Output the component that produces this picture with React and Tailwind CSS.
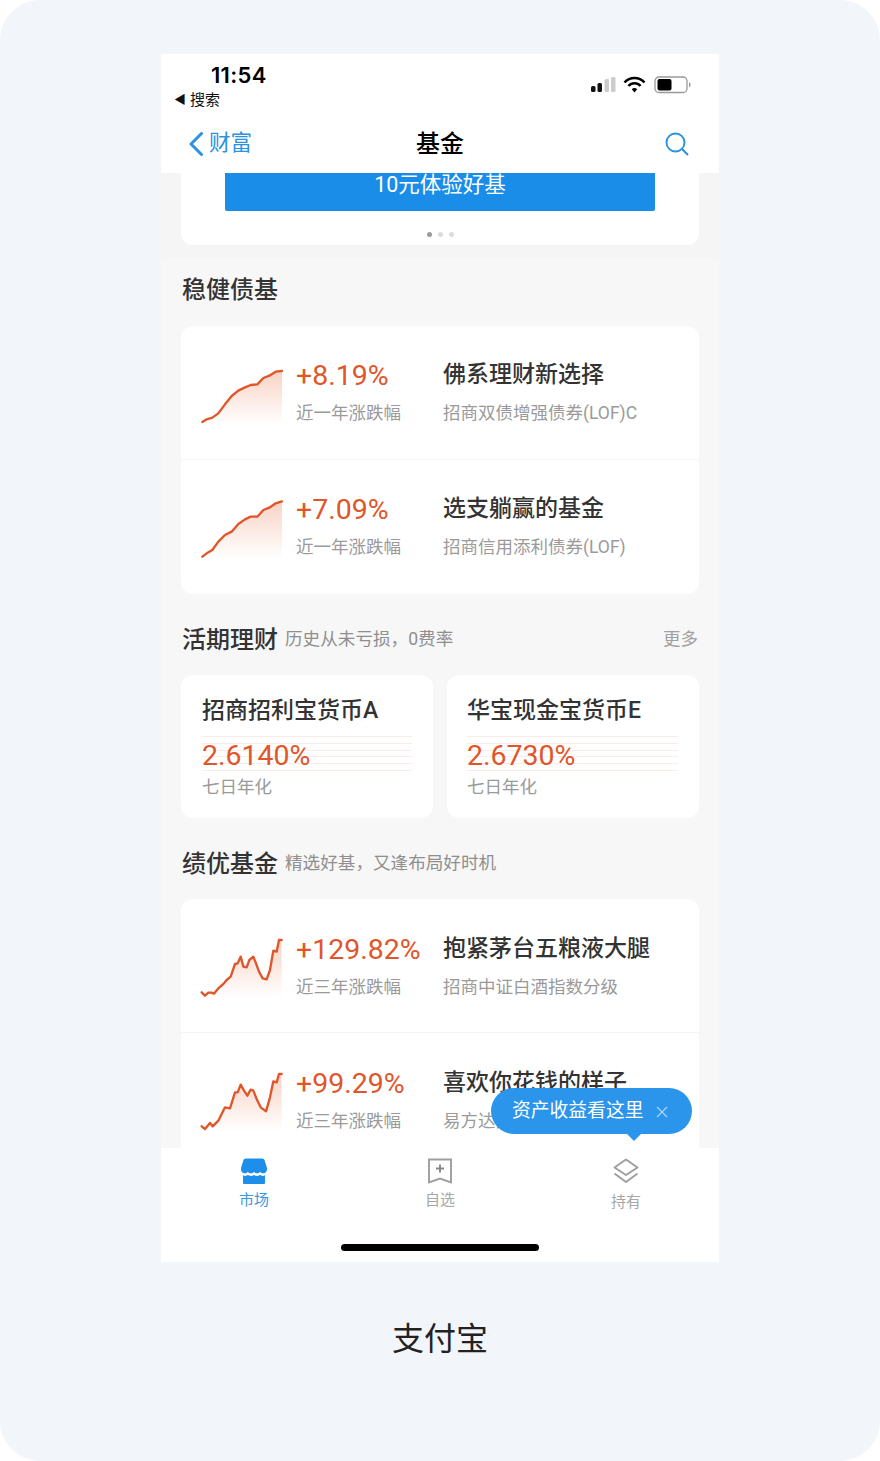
import React from "react";

const Spark = ({ id, view, points }) => {
    const [x, y, w, h] = view;
    const line = points.map((p) => p.join(",")).join(" ");
    const last = points[points.length - 1];
    const area = `${line} ${last[0]},${y + h - 2} ${points[0][0]},${y + h - 2}`;
    return (
        <svg viewBox={view.join(" ")} className="w-[85px] h-[60px] shrink-0">
            <defs>
                <linearGradient id={id} x1="0" y1="0" x2="0" y2="1">
                    <stop offset="0%" stopColor="#e9612f" stopOpacity="0.28" />
                    <stop offset="100%" stopColor="#e9612f" stopOpacity="0" />
                </linearGradient>
            </defs>
            <polygon points={area} fill={`url(#${id})`} />
            <polyline points={line} fill="none" stroke="#e0562a" strokeWidth="7" strokeLinejoin="round" strokeLinecap="round" />
        </svg>
    );
};

const chartA = [[67,246],[80,238],[97,233],[115,220],[135,193],[155,168],[175,152],[195,142],[212,135],[232,133],[250,114],[268,107],[287,95],[306,93]];
const chartB = [[67,650],[80,640],[97,630],[115,605],[135,585],[155,575],[175,552],[195,538],[212,530],[232,530],[250,510],[268,503],[287,490],[306,484]];
const chartC = [[35,217],[45,227],[55,218],[65,218],[72,221],[85,205],[100,192],[110,180],[122,170],[135,132],[143,130],[152,110],[160,140],[170,142],[178,120],[190,110],[198,130],[207,155],[218,175],[230,178],[240,150],[250,92],[260,95],[267,60],[275,60]];
const chartD = [[35,622],[45,630],[60,612],[68,622],[85,605],[105,565],[120,568],[135,520],[143,520],[152,497],[162,515],[172,530],[182,512],[190,515],[200,540],[212,565],[228,577],[240,535],[250,487],[260,490],[267,465],[275,465]];

const FundRow = ({ id, view, points, rate, period, title, name, divider, low }) => (
    <div className={`h-[134px] flex items-start pl-[19px] ${divider ? "border-b border-[#f4f4f4]" : ""}`}>
        <div className="mt-[39px]">
            <Spark id={id} view={view} points={points} />
        </div>
        <div className={`w-[147px] ml-[11px] shrink-0 ${low ? "pt-[32px]" : "pt-[31px]"}`}>
            <div className="text-[28.5px] leading-[38px] text-[#e0562a] whitespace-nowrap">{rate}</div>
            <div className="text-[17.5px] leading-[26px] mt-[5px] text-[#9a9a9a] whitespace-nowrap">{period}</div>
        </div>
        <div className={`whitespace-nowrap ${low ? "pt-[32px]" : "pt-[31px]"}`}>
            <div className="text-[23px] leading-[36px] font-medium text-[#333]">{title}</div>
            <div className="text-[17.5px] leading-[26px] mt-[7px] text-[#9a9a9a]">{name}</div>
        </div>
    </div>
);

const MoneyCard = ({ name, rate, tight }) => (
    <div className={`bg-white rounded-xl h-[143px] pr-[21px] pt-[19px] ${tight ? "pl-[20px]" : "pl-[21px]"}`}>
        <div className="text-[23px] leading-[34px] text-[#333] font-medium whitespace-nowrap">{name}</div>
        <div className="relative mt-[8px] h-[35px]">
            <div className="absolute inset-x-0 top-0 h-[35px] flex flex-col justify-between">
                <div className="h-px bg-[#faece6]" />
                <div className="h-px bg-[#faece6]" />
                <div className="h-px bg-[#faece6]" />
                <div className="h-px bg-[#faece6]" />
                <div className="h-px bg-[#faece6]" />
                <div className="h-px bg-[#faece6]" />
            </div>
            <div className="relative pt-[2px] text-[28.5px] leading-[36px] text-[#e0562a]">{rate}</div>
        </div>
        <div className="text-[17.5px] leading-[26px] mt-[3px] text-[#9a9a9a]">七日年化</div>
    </div>
);

const SectionHead = ({ title, note, more }) => (
    <div className="h-[81px] pt-[10px] flex items-center px-[21px]">
        <span className="text-[24px] font-medium text-[#333]">{title}</span>
        {note && <span className="text-[17.6px] text-[#8f8f8f] ml-[7px]">{note}</span>}
        {more && <span className="text-[17.5px] text-[#a0a0a0] ml-auto">{more}</span>}
    </div>
);

export default function App() {
    return (
        <div className="w-[880px] h-[1461px] bg-[#f2f5fa] rounded-[40px] pt-[54px] font-['Roboto','Noto_Sans_CJK_SC',sans-serif]">
            <div className="relative w-[558px] h-[1208px] ml-[161px] bg-[#f7f7f7] flex flex-col overflow-hidden">
                {/* status + nav */}
                <div className="h-[119px] bg-white shrink-0 relative z-10">
                    <div className="h-[62px] flex justify-between pr-[28px]">
                        <div>
                            <div className="pl-[50px] pt-[8px] text-[22px] leading-[26px] font-semibold tracking-[0.3px] font-['Inter'] text-black">11:54</div>
                            <div className="pl-[13px] text-[15px] leading-[24px] text-[#111] flex items-center">
                                <span className="text-[12px] mr-[4px]">◀</span>搜索
                            </div>
                        </div>
                        <svg viewBox="0 0 100 20" className="w-[100px] h-[20px] mt-[22px]">
                            <rect x="0" y="10" width="4.5" height="6" rx="1.5" fill="#111" />
                            <rect x="6.5" y="7" width="4.5" height="9" rx="1.5" fill="#111" />
                            <rect x="13.5" y="3" width="4.5" height="13" rx="1.5" fill="#ccc" />
                            <rect x="20" y="1" width="4.5" height="15" rx="1.5" fill="#ccc" />
                            <path d="M33.5 6.5a13.5 13.5 0 0 1 20 0" fill="none" stroke="#000" strokeWidth="2.6" />
                            <path d="M37.5 10a8 8 0 0 1 12 0" fill="none" stroke="#000" strokeWidth="2.6" />
                            <path d="M40.8 13.2a3.6 3.6 0 0 1 5.4 0L43.5 16.5z" fill="#000" />
                            <rect x="64" y="1" width="32" height="15.5" rx="4" fill="none" stroke="#999" strokeWidth="1.3" />
                            <rect x="66.5" y="3" width="14" height="11.5" rx="2" fill="#000" />
                            <rect x="98" y="6.5" width="1.4" height="4.5" rx="0.7" fill="#999" />
                        </svg>
                    </div>
                    <div className="relative h-[55px] flex items-center justify-between pl-[27px] pr-[30px]">
                        <div className="flex items-center text-[#2a92df]">
                            <svg viewBox="0 0 16 24" className="w-[16px] h-[24px]">
                                <path d="M13.5 1.5 3 12l10.500 10.500" fill="none" stroke="currentColor" strokeWidth="3" strokeLinecap="round" strokeLinejoin="round" />
                            </svg>
                            <span className="text-[21.5px] ml-[5px]">财富</span>
                        </div>
                        <span className="absolute left-0 right-0 text-center text-[24px] text-black font-medium">基金</span>
                        <svg viewBox="0 0 24 24" className="w-[24px] h-[24px] text-[#2a92df]">
                            <circle cx="10.5" cy="10.5" r="9" fill="none" stroke="currentColor" strokeWidth="1.9" />
                            <path d="m17.5 17.5 5 5" fill="none" stroke="currentColor" strokeWidth="1.9" strokeLinecap="round" />
                        </svg>
                    </div>
                </div>

                {/* scrolling content */}
                <div className="flex-1 overflow-hidden">
                    <div className="bg-[#f5f5f5] h-[85px] px-5">
                        <div className="bg-white rounded-b-xl h-[72px] px-[44px]">
                            <div className="h-[38px] bg-[#1a8de8] rounded-b-[2px] text-center text-white text-[21.5px] leading-[24px]">10元体验好基</div>
                            <div className="flex justify-center gap-[6px] mt-[21px]">
                                <div className="w-[5px] h-[5px] rounded-full bg-[#9b9b9b]" />
                                <div className="w-[5px] h-[5px] rounded-full bg-[#dcdcdc]" />
                                <div className="w-[5px] h-[5px] rounded-full bg-[#dcdcdc]" />
                            </div>
                        </div>
                    </div>

                    <div className="h-[68px] pb-[4px] flex items-center px-[21px] text-[24px] font-medium text-[#333]">稳健债基</div>
                    <div className="mx-5 bg-white rounded-xl">
                        <FundRow id="a" view={[60, 75, 255, 180]} points={chartA} rate="+8.19%" period="近一年涨跌幅" title="佛系理财新选择" name="招商双债增强债券(LOF)C" divider />
                        <FundRow id="b" view={[60, 477, 255, 180]} points={chartB} rate="+7.09%" period="近一年涨跌幅" title="选支躺赢的基金" name="招商信用添利债券(LOF)" />
                    </div>

                    <SectionHead title="活期理财" note="历史从未亏损，0费率" more="更多" />
                    <div className="mx-5 grid grid-cols-2 gap-[14px]">
                        <MoneyCard name="招商招利宝货币A" rate="2.6140%" />
                        <MoneyCard name="华宝现金宝货币E" rate="2.6730%" tight />
                    </div>

                    <SectionHead title="绩优基金" note="精选好基，又逢布局好时机" />
                    <div className="mx-5 bg-white rounded-xl">
                        <FundRow id="c" view={[30, 54, 255, 180]} points={chartC} rate="+129.82%" period="近三年涨跌幅" title="抱紧茅台五粮液大腿" name="招商中证白酒指数分级" divider low />
                        <FundRow id="d" view={[30, 459, 255, 180]} points={chartD} rate="+99.29%" period="近三年涨跌幅" title="喜欢你花钱的样子" name="易方达消费行业股票" low />
                    </div>
                </div>

                {/* tab bar */}
                <div className="h-[114px] bg-white shrink-0 relative z-10">
                    <div className="grid grid-cols-3 pt-[10px]">
                        <div className="flex flex-col items-center text-[#3a97e0]">
                            <svg viewBox="0 0 26 26" className="w-[26px] h-[26px]">
                                <path d="M5 .5h16c1.300 0 2.200.7 2.600 1.800L26 10c.3 2.800-1.200 5.300-3.500 5.300-1.600 0-2.800-.7-3.300-1.600-.8 1-1.900 1.600-3.100 1.600s-2.300-.6-3.100-1.600c-.8 1-1.900 1.600-3.100 1.600s-2.300-.6-3.100-1.600c-.5.900-1.700 1.600-3.300 1.600C1.200 15.300-.3 12.800 0 10l2.400-7.700C2.800 1.200 3.700.5 5 .5z" fill="#1d8fea" />
                                <path d="M2 17.300c1.500.8 3.400.8 4.800-.2 1.800 1.100 4.200 1.100 6.200-.1 2 1.200 4.400 1.200 6.200.1 1.400 1 3.300 1 4.800.2V25a1 1 0 0 1-1 1H3a1 1 0 0 1-1-1z" fill="#1d8fea" />
                            </svg>
                            <span className="text-[15px] leading-[20px] mt-[6px]">市场</span>
                        </div>
                        <div className="flex flex-col items-center text-[#a6a6a6]">
                            <svg viewBox="0 0 26 26" className="w-[26px] h-[26px]">
                                <path d="M2 1.500h22v23l-11-4-11 4z" fill="none" stroke="#9f9f9f" strokeWidth="1.900" />
                                <path d="M13 6.500v8M9 10.500h8" fill="none" stroke="#888" strokeWidth="1.900" />
                            </svg>
                            <span className="text-[15px] leading-[20px] mt-[6px]">自选</span>
                        </div>
                        <div className="flex flex-col items-center text-[#a6a6a6]">
                            <svg viewBox="0 0 26 26" className="w-[26px] h-[26px]">
                                <path d="M13 1.500 24.500 9.500 13 17 1.500 9.500z" fill="none" stroke="#9f9f9f" strokeWidth="2" strokeLinejoin="round" />
                                <path d="M1.500 15.500 13 24l11.500-8.500" fill="none" stroke="#9f9f9f" strokeWidth="2" strokeLinejoin="round" />
                            </svg>
                            <span className="text-[15px] leading-[20px] mt-[8px]">持有</span>
                        </div>
                    </div>
                    <div className="absolute left-[180px] bottom-[11px] w-[198px] h-[7px] rounded-full bg-black" />
                </div>

                {/* tooltip over the list */}
                <div className="absolute left-[330px] top-[1034px] z-20 w-[201px] h-[46px] pt-[1px] rounded-full bg-[#2b95ec] flex items-center pl-[21px] text-white text-[18.800px]">
                    <span className="whitespace-nowrap">资产收益看这里</span>
                    <svg viewBox="0 0 12 12" className="w-[12px] h-[12px] ml-[13px]">
                        <path d="M1 1l10 10M11 1 1 11" stroke="#a9d4f7" strokeWidth="1.300" fill="none" />
                    </svg>
                    <div className="absolute left-[136px] bottom-[-7px] w-0 h-0 border-x-[7px] border-x-transparent border-t-[7px] border-t-[#2b95ec]" />
                </div>
            </div>

            <div className="h-[154px] flex items-center justify-center text-[32px] text-[#222]">支付宝</div>
        </div>
    );
}
